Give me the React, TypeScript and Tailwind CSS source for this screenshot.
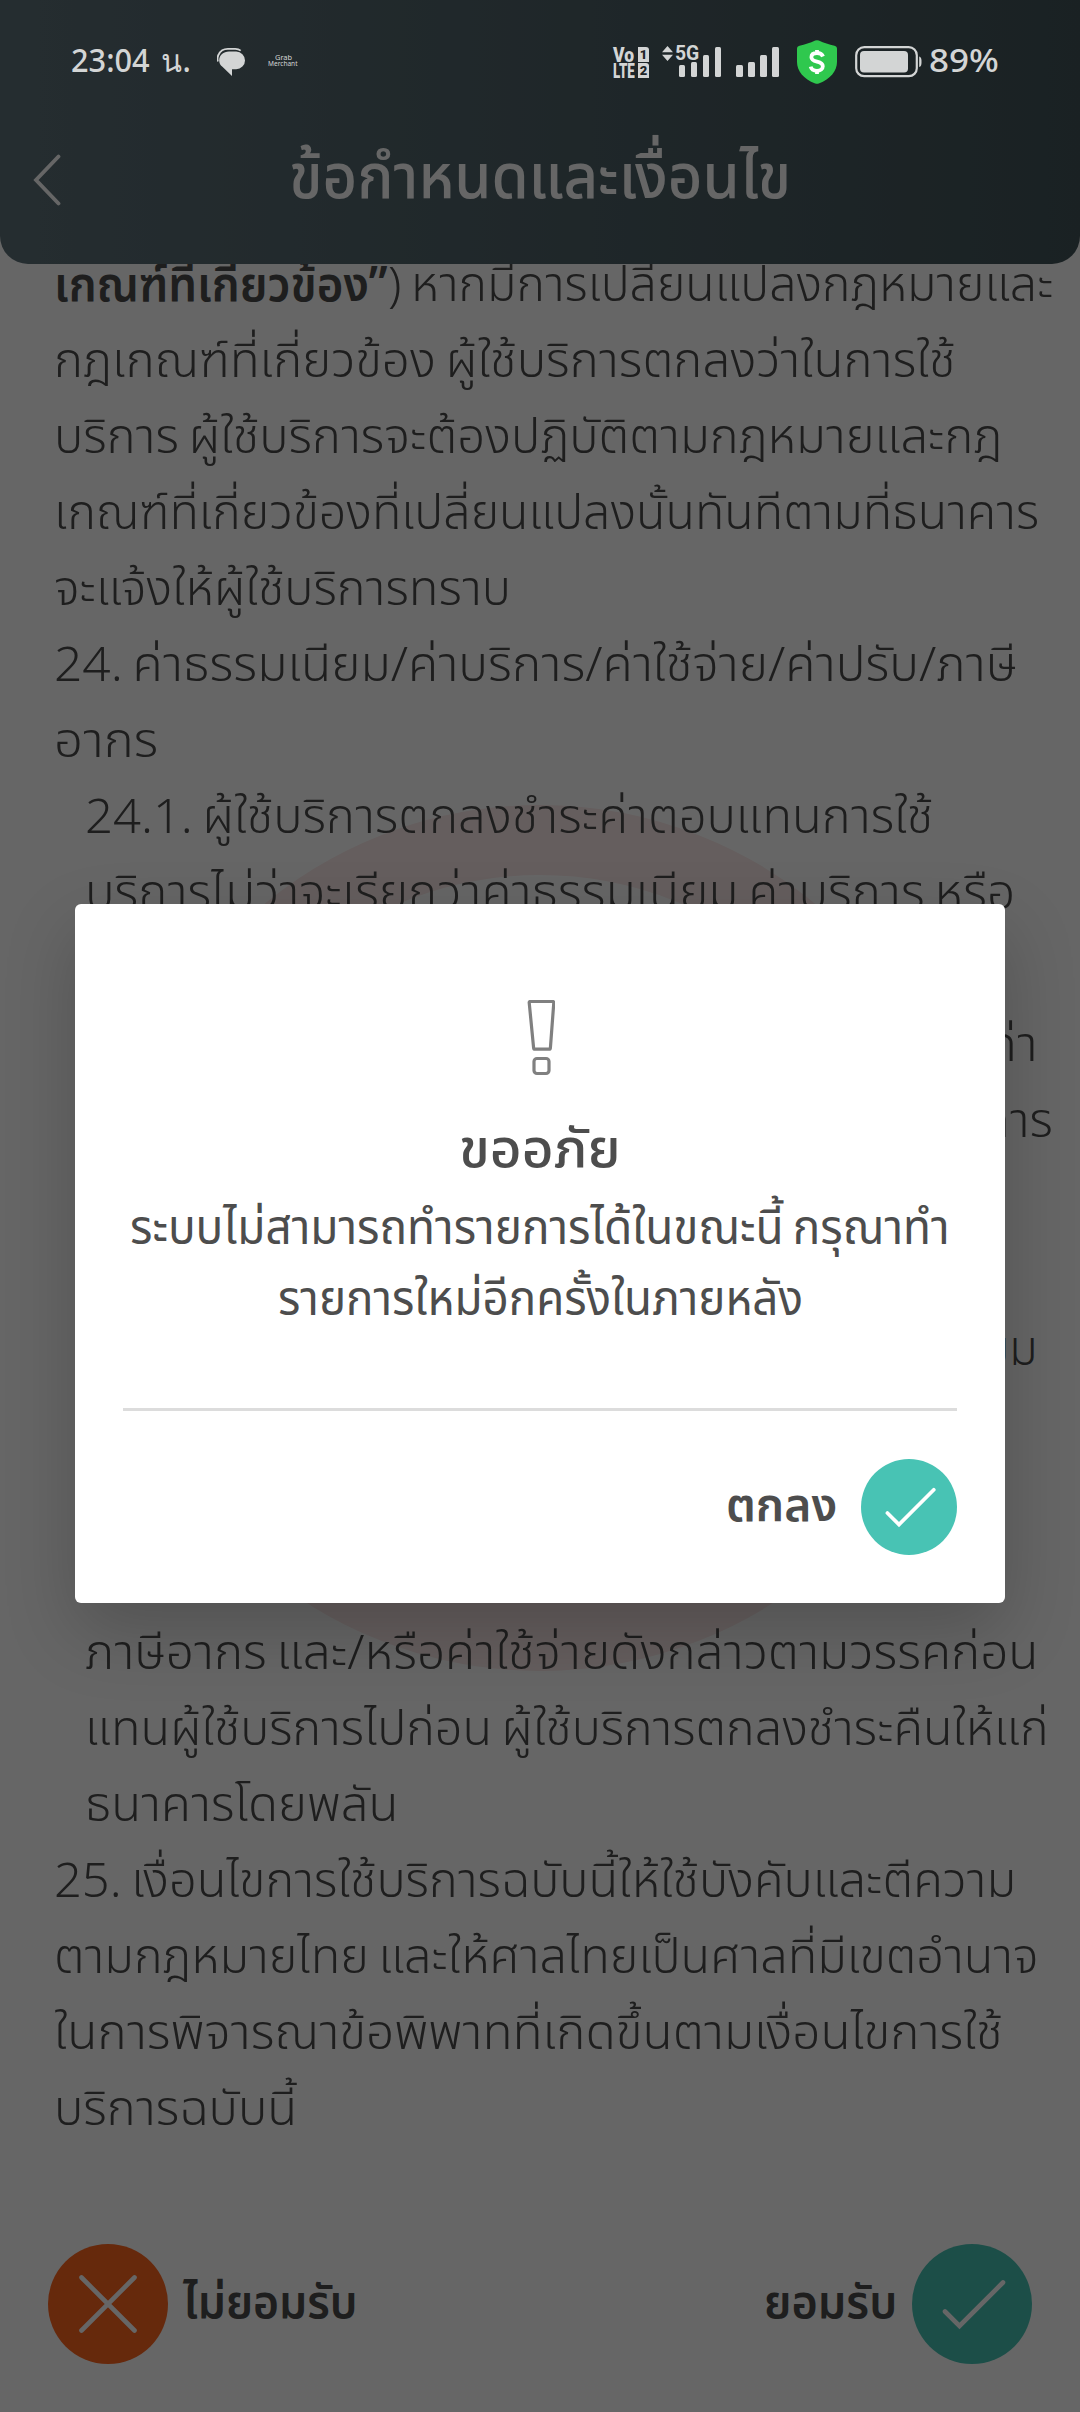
import { useLayoutEffect, useRef, useState } from 'react';
import type { ReactNode } from 'react';
import clsx from 'clsx';

interface FitTextProps {
  width: number;
  className?: string;
  children: ReactNode;
}

// Keeps a single line of text at a fixed width, whatever the font's own advance is
function FitText({ width, className, children }: FitTextProps) {
  const ref = useRef<HTMLSpanElement>(null);
  const [scale, setScale] = useState(1);

  useLayoutEffect(() => {
    if (ref.current) setScale(width / ref.current.offsetWidth);
  }, [width]);

  return (
    <span className={clsx('block', className)} style={{ width }}>
      <span
        ref={ref}
        className="inline-block origin-left whitespace-nowrap"
        style={{ transform: `scaleX(${scale})` }}
      >
        {children}
      </span>
    </span>
  );
}

interface TermsLine {
  text: ReactNode;
  width: number;
  bold?: { text: string; width: number };
  indent?: 'sub' | 'tail';
}

const TERMS: TermsLine[] = [
  {
    bold: { text: 'เกณฑ์ที่เกี่ยวข้อง”', width: 334 },
    text: ') หากมีการเปลี่ยนแปลงกฎหมายและ',
    width: 665,
  },
  { text: 'กฎเกณฑ์ที่เกี่ยวข้อง ผู้ใช้บริการตกลงว่าในการใช้', width: 902 },
  { text: 'บริการ ผู้ใช้บริการจะต้องปฏิบัติตามกฎหมายและกฎ', width: 948 },
  { text: 'เกณฑ์ที่เกี่ยวข้องที่เปลี่ยนแปลงนั้นทันทีตามที่ธนาคาร', width: 985 },
  { text: 'จะแจ้งให้ผู้ใช้บริการทราบ', width: 457 },
  { text: '24. ค่าธรรมเนียม/ค่าบริการ/ค่าใช้จ่าย/ค่าปรับ/ภาษี', width: 963 },
  { text: 'อากร', width: 104 },
  { text: '24.1. ผู้ใช้บริการตกลงชำระค่าตอบแทนการใช้', width: 848, indent: 'sub' },
  { text: 'บริการไม่ว่าจะเรียกว่าค่าธรรมเนียม ค่าบริการ หรือ', width: 930, indent: 'sub' },
  { text: '', width: 0 },
  { text: 'ค่า', width: 52, indent: 'tail' },
  { text: 'การ', width: 72, indent: 'tail' },
  { text: '', width: 0 },
  { text: '', width: 0 },
  { text: 'ยม', width: 56, indent: 'tail' },
  { text: '', width: 0 },
  { text: '', width: 0 },
  { text: '', width: 0 },
  { text: 'ภาษีอากร และ/หรือค่าใช้จ่ายดังกล่าวตามวรรคก่อน', width: 953, indent: 'sub' },
  { text: 'แทนผู้ใช้บริการไปก่อน ผู้ใช้บริการตกลงชำระคืนให้แก่', width: 964, indent: 'sub' },
  { text: 'ธนาคารโดยพลัน', width: 314, indent: 'sub' },
  { text: '25. เงื่อนไขการใช้บริการฉบับนี้ให้ใช้บังคับและตีความ', width: 962 },
  { text: 'ตามกฎหมายไทย และให้ศาลไทยเป็นศาลที่มีเขตอำนาจ', width: 985 },
  { text: 'ในการพิจารณาข้อพิพาทที่เกิดขึ้นตามเงื่อนไขการใช้', width: 949 },
  { text: 'บริการฉบับนี้', width: 243 },
];

const BAR_HEIGHTS = [12, 15, 22, 30];

function SignalBars() {
  return (
    <div className="flex h-[30px] items-end gap-[5.7px]">
      {BAR_HEIGHTS.map((height) => (
        <div key={height} className="w-[6.3px] rounded-[1.5px] bg-[#d3d5d5]" style={{ height }} />
      ))}
    </div>
  );
}

function StatusBar() {
  return (
    <div className="absolute inset-x-0 top-0 z-20 flex h-[124px] items-center text-[#d3d5d5]">
      <FitText width={120} className="-mt-[4px] ml-[71px] font-['Noto_Sans'] text-[32px] font-medium leading-[40px] [word-spacing:4px]">
        23:04 น.
      </FitText>
      <svg className="ml-[26px]" width="28" height="28" viewBox="0 0 28 28" fill="none">
        <path
          d="M12 3.6h7.2a8.8 8.8 0 0 1 0 17.6H15V28L5.4 18.8C3.2 17 2.2 14.8 2.2 12.4 2.2 7.4 6.5 3.6 12 3.6Z"
          fill="#d3d5d5"
        />
        <path d="M.9 13.5C.4 11.5.3 9 1.5 6.8 3.2 3.2 6.6.9 10.8.9h7.5c2.1 0 4 .6 5.4 1.7" stroke="#d3d5d5" strokeWidth="1.8" />
      </svg>
      <div className="-mt-[2px] ml-[23px] flex w-[30px] flex-col items-center font-['Noto_Sans'] text-[7px] leading-[6.5px]">
        <FitText width={17}>Grab</FitText>
        <FitText width={30}>Merchant</FitText>
      </div>

      <div className="ml-[315px] flex w-[36px] flex-col gap-px font-['Roboto'] text-[20px] font-black">
        <div className="flex items-center justify-between">
          <FitText width={21} className="h-[15px] leading-[16px]">
            Vo
          </FitText>
          <span className="flex h-[15px] w-[11px] items-center justify-center rounded-tr-[3px] bg-[#d3d5d5] text-[13px] leading-none text-[#1e2426]">
            1
          </span>
        </div>
        <div className="flex items-center justify-between">
          <FitText width={22} className="h-[15px] leading-[16px]">
            LTE
          </FitText>
          <span className="flex h-[15px] w-[11px] items-center justify-center rounded-tr-[3px] bg-[#d3d5d5] text-[13px] leading-none text-[#1e2426]">
            2
          </span>
        </div>
      </div>
      <div className="relative ml-[30px]">
        <SignalBars />
        <div className="absolute -left-[17px] -top-[2px] flex items-center gap-[2px]">
          <svg width="11" height="15" viewBox="0 0 11 15" fill="#d3d5d5">
            <path d="M5.5 0 11 6.2H0ZM0 8.8h11L5.500 15Z" />
          </svg>
          <FitText width={24} className="font-['Roboto'] text-[21px] font-bold leading-[16px]">
            5G
          </FitText>
        </div>
      </div>
      <div className="ml-[15px]">
        <SignalBars />
      </div>
      <svg className="ml-[18px]" width="40" height="44" viewBox="0 0 40 44">
        <path
          d="M18.2.6a4 4 0 0 1 3.6 0C27 3 32 4.7 37.5 5.8c1.6.4 2.5 1.4 2.5 3V22c0 9-6.5 17-18.2 21.5a5 5 0 0 1-3.6 0C6.500 39 0 31 0 22V8.8c0-1.6.9-2.6 2.5-3C8 4.7 13 3 18.2.6Z"
          fill="#2fc84e"
        />
        <path
          d="M26 16.5c-.8-2.2-3-3.5-6-3.5-3.4 0-5.600 1.6-5.600 4.200 0 6 11.400 2.800 11.400 9 0 2.800-2.500 4.600-5.800 4.600-3.400 0-5.700-1.500-6.300-4.200M20 10v3.500M20 30v4"
          fill="none"
          stroke="#fff"
          strokeWidth="3.8"
        />
      </svg>
      <svg className="ml-[18px]" width="68" height="32" viewBox="0 0 68 32">
        <rect x="1.2" y="1.2" width="60.6" height="29" rx="8" fill="none" stroke="#d3d5d5" strokeWidth="2.2" />
        <rect x="5" y="5" width="48" height="21.5" rx="4" fill="#d3d5d5" />
        <path d="M64.2 10.5c1.8.8 2.3 1.8 2.3 5.3s-.5 4.5-2.3 5.300Z" fill="#d3d5d5" />
      </svg>
      <FitText width={70} className="-mt-[4px] ml-[6px] font-['Noto_Sans'] text-[32px] font-medium leading-[40px]">
        89%
      </FitText>
    </div>
  );
}

function Header() {
  return (
    <header className="relative h-[264px] shrink-0 rounded-b-[28px] bg-linear-to-r from-[#5d7179] to-[#425459] pt-[132px]">
      <div className="flex items-center">
        <svg className="ml-[33px]" width="28" height="52" viewBox="0 0 28 52" fill="none">
          <path d="M25.5 2.5 3 26l22.5 23.5" stroke="#fff" strokeWidth="3.8" strokeLinecap="round" />
        </svg>
        <FitText width={502} className="ml-[228px] -mt-px text-[62px] font-medium leading-[96px] text-white">
          ข้อกำหนดและเงื่อนไข
        </FitText>
      </div>
    </header>
  );
}

function CheckIcon({ size }: { size: number }) {
  return (
    <svg width={size} height={size} viewBox="0 0 120 120" fill="none">
      <circle cx="60" cy="60" r="60" fill="#48c3b4" />
      <path d="M33 67.500 47.500 82 91 38.500" stroke="#fff" strokeWidth="4.6" strokeLinecap="round" />
    </svg>
  );
}

function Terms() {
  return (
    <main className="relative h-[1960px] overflow-hidden pl-[53.5px] text-[48px] font-[330] leading-[76px] [word-spacing:-3px]">
      <svg className="absolute left-[107px] top-[541px]" width="866" height="866" viewBox="0 0 866 866">
        <circle cx="433" cy="433" r="398" fill="none" stroke="#fcebea" strokeWidth="70" />
      </svg>
      <div className="relative -mt-[15px]">
        {TERMS.map((line, i) => (
          <div
            key={i}
            className={clsx(
              'flex h-[76px]',
              line.indent === 'sub' && 'pl-[31px]',
              line.indent === 'tail' && i === 11 && 'justify-end pr-[27px]',
              line.indent === 'tail' && i !== 11 && 'justify-end pr-[42px]',
            )}
          >
            {line.bold && (
              <FitText width={line.bold.width} className="font-semibold">
                {line.bold.text}
              </FitText>
            )}
            <FitText width={line.width}>{line.text}</FitText>
          </div>
        ))}
      </div>
    </main>
  );
}

function Footer() {
  return (
    <footer className="mt-5 flex h-[120px] items-center justify-between px-12 text-[47px] font-semibold leading-[76px]">
      <div className="flex items-center">
        <svg width="120" height="120" viewBox="0 0 120 120" fill="none">
          <circle cx="60" cy="60" r="60" fill="#ff6620" />
          <path d="m33.5 33.5 53 53m0-53-53 53" stroke="#fff" strokeWidth="4.6" strokeLinecap="round" />
        </svg>
        <FitText width={175} className="ml-[15px]">
          ไม่ยอมรับ
        </FitText>
      </div>
      <div className="flex items-center">
        <FitText width={133} className="mr-[15px]">
          ยอมรับ
        </FitText>
        <CheckIcon size={120} />
      </div>
    </footer>
  );
}

function Dialog() {
  return (
    <div className="mx-[75px] flex h-[699px] w-[930px] flex-col rounded-[6px] bg-white px-12 pt-24 shadow-[0_28px_72px_rgba(0,0,0,0.2)]">
      <svg
        className="ml-[404px]"
        width="28"
        height="76"
        viewBox="0 0 28 76"
        fill="none"
        stroke="#808080"
        strokeWidth="3.2"
      >
        <path d="M3.2 1.500h22.600a1 1 0 0 1 1 1.100l-3.400 45.200a1.500 1.500 0 0 1-1.500 1.400H8.100a1.500 1.500 0 0 1-1.500-1.400L2.200 2.600a1 1 0 0 1 1-1.100Z" />
        <rect x="7" y="58.500" width="15" height="15" rx="3" />
      </svg>
      <FitText width={162} className="mt-[32px] self-center text-[53px] font-medium leading-[86px]">
        ขออภัย
      </FitText>
      <FitText width={820} className="self-center text-[48px] font-[380] leading-[71px] [word-spacing:-3px]">
        ระบบไม่สามารถทำรายการได้ในขณะนี้ กรุณาทำ
      </FitText>
      <FitText width={525} className="self-center text-[48px] font-[380] leading-[71px]">
        รายการใหม่อีกครั้งในภายหลัง
      </FitText>
      <div className="mt-[72px] h-[3px] shrink-0 bg-[#dcdcdc]" />
      <div className="mt-12 flex items-center justify-end">
        <FitText width={111} className="mr-[24px] text-[47px] font-semibold leading-[76px]">
          ตกลง
        </FitText>
        <CheckIcon size={96} />
      </div>
    </div>
  );
}

export default function App() {
  return (
    <div className="relative flex h-[2412px] w-[1080px] flex-col overflow-hidden bg-white font-['Noto_Sans_Thai','Noto_Sans',sans-serif] text-[#4d4d4d]">
      <Header />
      <Terms />
      <Footer />
      <StatusBar />
      <div className="absolute inset-0 z-10 bg-black/60 pt-[904px]">
        <Dialog />
      </div>
    </div>
  );
}
